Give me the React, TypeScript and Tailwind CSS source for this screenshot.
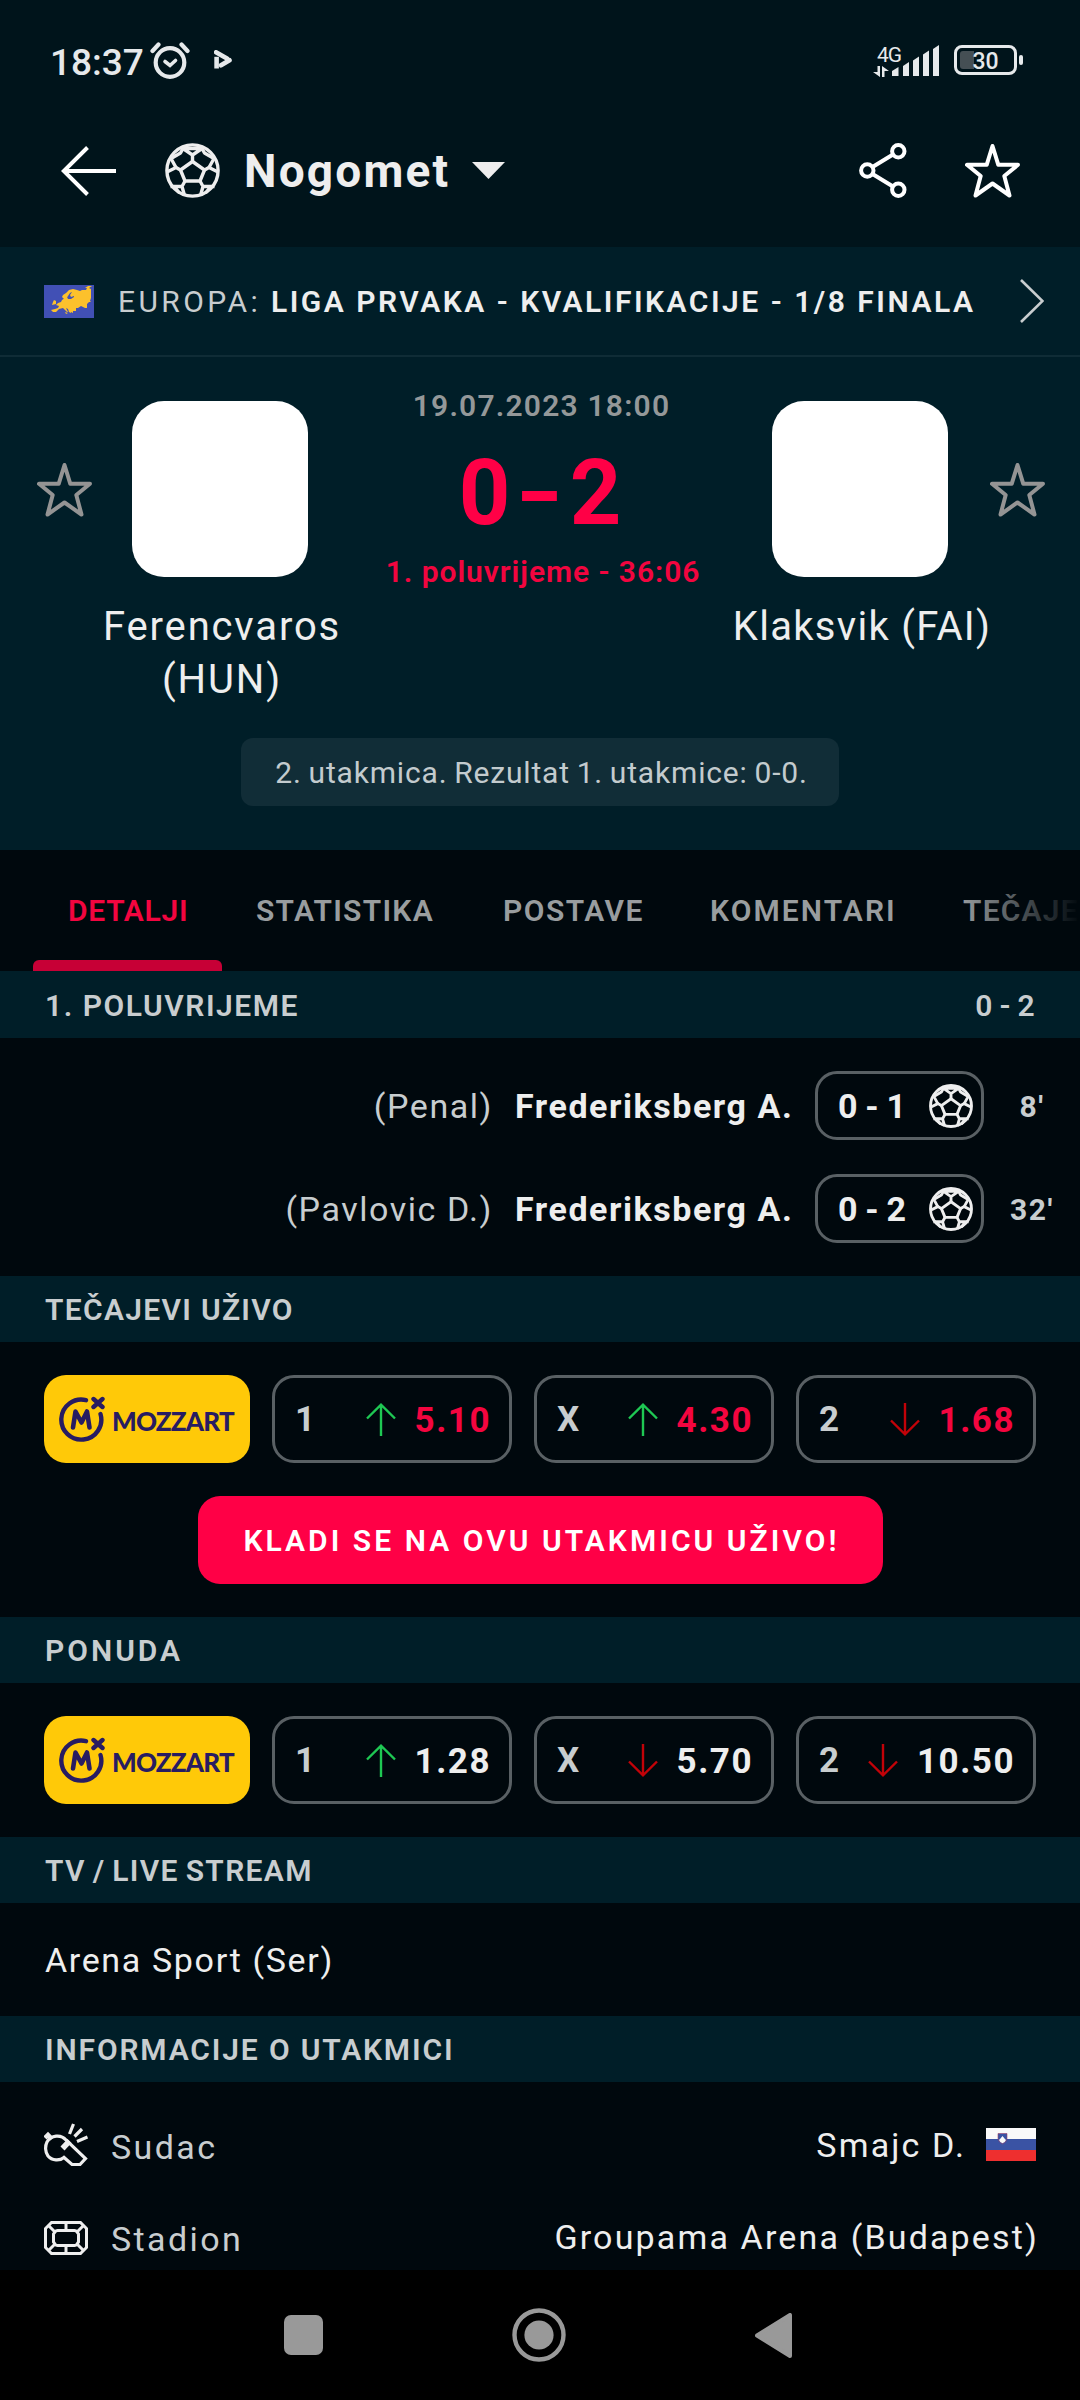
import { clsx } from 'clsx'
import type { ReactNode } from 'react'

type Trend = 'up' | 'down'

const tabs = [
  { label: 'DETALJI', className: 'ml-[68px] w-[188px] tracking-[0.7px]' },
  { label: 'STATISTIKA', className: 'w-[247px] tracking-[1.3px]' },
  { label: 'POSTAVE', className: 'w-[207px] tracking-[1.5px]' },
  { label: 'KOMENTARI', className: 'w-[253px] tracking-[2.1px]' },
  { label: 'TEČAJE', className: 'tracking-[1.2px]' },
]

const goals = [
  { note: '(Penal)', player: 'Frederiksberg A.', score: '0 - 1', minute: "8'" },
  { note: '(Pavlovic D.)', player: 'Frederiksberg A.', score: '0 - 2', minute: "32'" },
]

const liveOdds: { name: string; trend: Trend; value: string }[] = [
  { name: '1', trend: 'up', value: '5.10' },
  { name: 'X', trend: 'up', value: '4.30' },
  { name: '2', trend: 'down', value: '1.68' },
]

const preOdds: { name: string; trend: Trend; value: string }[] = [
  { name: '1', trend: 'up', value: '1.28' },
  { name: 'X', trend: 'down', value: '5.70' },
  { name: '2', trend: 'down', value: '10.50' },
]

function BallIcon({ className, stroke = 3.4 }: { className?: string; stroke?: number }) {
  return (
    <svg viewBox="0 0 55 55" className={className} fill="none" stroke="#eeeeee" strokeWidth={stroke} strokeLinejoin="round">
      <circle cx="27.5" cy="27.5" r="25.6" />
      <path d="M27.5 18.5 39.5 27 35 38H20L15.5 27z" />
      <path d="M27.5 18.5V12M18 5.5 27.5 12 37 5.5M17 5.5H38" />
      <path d="M18 5.5 15.5 10 6 15.5 11 24.5M37 5.5 39.5 10 49 15.5 44 24.5" />
      <path d="M15.5 27 11 24.5 2 29M39.5 27 44 24.5 53 29" />
      <path d="M20 38 17 43.5H5.5M35 38 38 43.5H49.5M17 43.5 19.5 52.5M38 43.5 35.5 52.5M9 43.5 14.5 50M46 43.5 40.5 50" />
    </svg>
  )
}

function StarIcon({ color }: { color: string }) {
  return (
    <svg viewBox="0 0 55 55" className="h-[55px] w-[55px] shrink-0" fill="none" stroke={color} strokeWidth="4" strokeLinejoin="round">
      <path d="M27.5 3 33.3 21.8H53L39.3 33 44.5 52.5 27.5 40.5 10.5 52.5 15.7 33 2 21.8H21.7z" />
    </svg>
  )
}

function TrendIcon({ trend }: { trend: Trend }) {
  return (
    <svg
      viewBox="0 0 30 33"
      className={clsx('h-[33px] w-[30px]', trend === 'down' && 'rotate-180')}
      fill="none"
      stroke={trend === 'up' ? '#1ec853' : '#c20208'}
      strokeWidth="2.4"
    >
      <path d="M15 33V1.5M1 15.5 15 1.7 29 15.5" />
    </svg>
  )
}

function EuropeFlag() {
  return (
    <svg viewBox="0 0 50 33" className="h-[33px] w-[50px]">
      <rect width="50" height="33" fill="#4150b5" />
      <path
        fill="#fcc12c"
        d="M7 25l4-1 3-1 1-2-3-1 2-2 3-1 1-2 3-2 2-1 1 2 3 0 3-2 0-1-3 1-1-2 2-3-2 1-2 3-2 3-2 0-2-2 1-2 3-2 3-3 4-1 4 1 3 1 2-1 4 0 1-2-2 0 3-2 4 0-3 2 2 1 0 9-1 3 1 1-2 0-2 2 0 4-2 0-4-2-3 2-2 0 0 3-3 0 0 2-2-1 0 1-2-1-1-3-2-1 2 4-1 0-4-4-4 1-3 3-3 0-2-2z"
      />
      <path fill="#fcc12c" d="M9 17l1-2 2 1 0 3-4 1zM21 27l3 1-2 1z" />
    </svg>
  )
}

function SloveniaFlag() {
  return (
    <svg viewBox="0 0 50 33" className="h-[33px] w-[50px]">
      <rect width="50" height="33" fill="#f9f9f9" />
      <rect y="11" width="50" height="11" fill="#3a53a4" />
      <rect y="22" width="50" height="11" fill="#ee2f2f" />
      <path d="M12 5.5h9v5q-.5 4-4.5 5.500-4-1.500-4.500-5.500z" fill="#3a53a4" stroke="#a0436a" strokeWidth=".6" />
      <path d="M13 12l1.500-1.500L16.500 8l2 2.500L20 12q-1 2.500-3.500 3.200Q14 14.500 13 12z" fill="#f9f9f9" />
    </svg>
  )
}

function WhistleIcon() {
  return (
    <svg viewBox="0 0 44 44" className="h-11 w-11" fill="none" stroke="#eeeeee" strokeWidth="3.2">
      <path d="M3 19C7 12 17 11 22 17L41.5 35.5 36 41.5H28L20 34.5C16 38 8 38 4 33 1 29 1 23 3 19z" />
      <path d="M25.5 18 18.5 25.5" strokeWidth="5.5" />
      <path d="M1 15 4 12 8 16" strokeWidth="4.5" />
      <path d="M25.5 11 29.5 1M30.5 13.5 38 6M33 18.5 43.5 14" />
    </svg>
  )
}

function StadiumIcon() {
  return (
    <svg viewBox="0 0 44 34" className="h-[34px] w-11" fill="none" stroke="#eeeeee" strokeWidth="3">
      <path d="M7.5 1.5H36.5L42.5 7.5V26.5L36.5 32.5H7.5L1.5 26.5V7.5z" />
      <path d="M13.5 9.5H30.5Q32 9.5 33 11L34.5 13V21L33 23Q32 24.5 30.5 24.5H13.5Q12 24.5 11 23L9.500 21V13L11 11Q12 9.500 13.500 9.500z" />
      <path d="M22 1.500V9.500M22 24.500V32.500M4 4 11 11M40 4 33 11M4 30 11 23M40 30 33 23" />
    </svg>
  )
}

function MozzartLogo() {
  return (
    <div className="flex h-[88px] w-[206px] shrink-0 items-center rounded-[22px] bg-[#ffc908] pl-[15px]">
      <svg viewBox="0 0 46 46" className="h-[46px] w-[46px] shrink-0" fill="none" stroke="#281c62" strokeLinecap="round" strokeLinejoin="round">
        <path d="M27 4.2A20 20 0 1 0 41.5 18" strokeWidth="4.4" />
        <path d="M14 31.5 16.5 15.5 22.5 26.5 28 15.5 30.5 31.5" strokeWidth="4.6" />
        <path d="M34.5 3 43.5 11M43.5 3 34.5 11" strokeWidth="4.4" />
      </svg>
      <span className="mt-1 ml-[7px] font-['Lato'] text-[26px] leading-none font-black tracking-[-0.8px] text-[#281c62]">
        MOZZART
      </span>
    </div>
  )
}

function SectionHeader({ title, right, className }: { title: string; right?: string; className?: string }) {
  return (
    <div className={clsx('flex items-center justify-between bg-[#001e28] pt-[2px] pr-[45px] pl-[45px] text-[30px] leading-none font-semibold text-[#c8cdcf]', className)}>
      <span>{title}</span>
      {right && <span className="tracking-[0.3px] [word-spacing:-1px]">{right}</span>}
    </div>
  )
}

function OddsRow({ odds, live }: { odds: typeof liveOdds; live?: boolean }) {
  return (
    <div className="flex gap-[22px] px-11">
      <MozzartLogo />
      {odds.map((o) => (
        <div
          key={o.name}
          className="flex h-[88px] flex-1 items-center rounded-[22px] border-3 border-[#596064] pr-[18px] pl-5 text-[35px] leading-none font-bold"
        >
          <span className="mt-[1px] text-[#c8cdcf]">{o.name}</span>
          <div className="ml-auto flex items-center gap-[19px]">
            <TrendIcon trend={o.trend} />
            <span className={clsx('mt-[2px] tracking-[1.5px]', live ? 'text-[#f4053f]' : 'text-[#eeeeee]')}>{o.value}</span>
          </div>
        </div>
      ))}
    </div>
  )
}

function Team({ name, className }: { name: string; className?: string }) {
  return (
    <div className="flex w-[256px] shrink-0 flex-col items-center">
      <div className="mt-11 h-44 w-44 rounded-[32px] bg-white" />
      <div className={clsx('mt-[23px] text-center text-[40px] leading-[53px] whitespace-pre text-[#eeeeee]', className)}>{name}</div>
    </div>
  )
}

function InfoRow({ icon, label, children }: { icon: ReactNode; label: string; children: ReactNode }) {
  return (
    <div className="flex items-center px-11 text-[34px] leading-none tracking-[2.15px]">
      {icon}
      <span className="mt-[3px] ml-[23px] tracking-[2.4px] text-[#c8cdcf]">{label}</span>
      <div className="-mt-[1px] ml-auto flex items-center text-[#eeeeee]">{children}</div>
    </div>
  )
}

function StatusBar() {
  return (
    <div className="flex h-[120px] items-center text-[#e6e9eb]">
      <span className="mt-[5px] ml-[50px] w-[100px] text-[37px] leading-none font-medium">18:37</span>
      <svg viewBox="0 0 40 37" className="h-[37px] w-10" fill="none" stroke="#e6e9eb" strokeLinecap="round">
        <circle cx="20" cy="20.5" r="14.3" strokeWidth="4.2" />
        <path d="M2.5 9 8.5 2.5M37.5 9 31.5 2.5" strokeWidth="4.2" />
        <path d="M15 19.5 20 23.5 25.5 18.5" strokeWidth="3.6" />
      </svg>
      <svg viewBox="0 0 18 20" className="ml-6 h-5 w-[18px]" fill="none" stroke="#e6e9eb" strokeWidth="4.6">
        <path d="M2 2.300 13 8.500" strokeLinecap="round" />
        <path d="M2.600 6.800V18.500" />
        <path d="M7 15.300 15.500 10.200" strokeLinecap="round" />
      </svg>
      <div className="mt-[1px] ml-auto flex w-[26px] flex-col">
        <span className="ml-1 text-[21px] leading-[21px] tracking-[-1px]">4G</span>
        <svg viewBox="0 0 16 11" className="h-[11px] w-4" fill="#e6e9eb">
          <path d="M4.5 0H7V11L0 6H4.5zM11.5 11H9V0L16 5H11.5z" />
        </svg>
      </div>
      <svg viewBox="0 0 48 31" className="-ml-[7px] h-[31px] w-12" fill="#e6e9eb">
        <path d="M0 26 6.500 22V31H0zM11 21 17 17V31H11zM21 15.500 27 11.500V31H21zM31 9.500 37 5.500V31H31zM41 4 47 0V31H41z" />
      </svg>
      <div className="ml-[14px] flex items-center gap-[2px]">
        <div className="relative flex h-[30px] w-[63px] items-center justify-center rounded-[8px] border-3 border-[#e6e9eb]">
          <div className="absolute top-[3px] left-[3px] h-[18px] w-[14px] rounded-l-[3px] bg-[#454f54]" />
          <span className="relative mt-[2px] text-[23px] leading-none font-medium">30</span>
        </div>
        <div className="h-[10px] w-1 rounded-[2px] bg-[#e6e9eb]" />
      </div>
      <div className="w-[57px]" />
    </div>
  )
}

export default function App() {
  return (
    <div className="flex h-[2400px] w-[1080px] flex-col overflow-hidden bg-[#00080d] font-['Roboto',sans-serif]">
      <header className="h-[247px] bg-[#00141b]">
        <StatusBar />
        <div className="flex h-[101px] items-center">
          <svg viewBox="0 0 55 50" className="ml-[61px] h-[50px] w-[55px]" fill="none" stroke="#ffffff" strokeWidth="4">
            <path d="M55 25H3M26.5 1.5 2.8 25 26.5 48.5" />
          </svg>
          <BallIcon className="ml-[49px] h-[55px] w-[55px]" />
          <h1 className="ml-[24px] w-[228px] text-[46px] leading-none font-bold tracking-[2.2px] text-[#eeeeee]">Nogomet</h1>
          <svg viewBox="0 0 33 17" className="h-[17px] w-[33px]" fill="#eeeeee">
            <path d="M0 0H33L16.5 17z" />
          </svg>
          <svg viewBox="0 0 48 55" className="ml-auto h-[55px] w-12" fill="none" stroke="#ffffff" strokeWidth="4">
            <circle cx="8.3" cy="27.5" r="6.2" />
            <circle cx="39.3" cy="8.3" r="6.2" />
            <circle cx="39.3" cy="46.7" r="6.2" />
            <path d="M13.5 24 34 11.5M13.5 31 34 43.5" />
          </svg>
          <div className="mr-[60px] ml-[58px]">
            <StarIcon color="#ffffff" />
          </div>
        </div>
      </header>

      <div className="flex h-[110px] items-center border-b-2 border-[#0f2c36] bg-[#001e28] text-[30px] leading-none">
        <div className="ml-11">
          <EuropeFlag />
        </div>
        <span className="mt-[2px] ml-[24px] w-[153px] tracking-[3.4px] text-[#c8cdcf]">EUROPA:</span>
        <span className="mt-[2px] font-semibold tracking-[2.5px] whitespace-nowrap text-[#eeeeee]">LIGA PRVAKA - KVALIFIKACIJE - 1/8 FINALA</span>
        <svg viewBox="0 0 24 44" className="mr-9 ml-auto h-11 w-6" fill="none" stroke="#c8cdcf" strokeWidth="2.6">
          <path d="M1 1 22.5 22 1 43" />
        </svg>
      </div>

      <section className="flex h-[493px] flex-col bg-[#001e28]">
        <div className="flex h-[381px]">
          <div className="mt-[105px] ml-[37px] w-[55px]">
            <StarIcon color="#949494" />
          </div>
          <Team name={'Ferencvaros\n(HUN)'} className="ml-1 tracking-[1.85px]" />
          <div className="flex flex-1 flex-col items-center leading-none">
            <div className="mt-[34px] ml-[3px] text-[30px] font-semibold tracking-[1.2px] text-[#949899]">19.07.2023 18:00</div>
            <div className="mt-[28px] flex text-[90px] font-bold text-[#ff0046]">
              <span className="w-[55.5px] text-center">0</span>
              <span className="w-[55.5px] scale-x-140 text-center">-</span>
              <span className="w-[55.5px] text-center">2</span>
            </div>
            <div className="mt-[18px] ml-[6px] text-[30px] font-semibold tracking-[0.95px] whitespace-nowrap text-[#f2053f]">1. poluvrijeme - 36:06</div>
          </div>
          <Team name="Klaksvik (FAI)" className="ml-1 tracking-[1.3px]" />
          <div className="mt-[105px] mr-[35px] ml-[2px]">
            <StarIcon color="#949494" />
          </div>
        </div>
        <div className="flex h-[68px] w-[598px] items-center justify-center self-center rounded-[12px] bg-[#112d37] pt-[1px] pl-[3px] text-[30px] leading-none tracking-[0.83px] [word-spacing:-1.5px] whitespace-nowrap text-[#c3cbce]">
          2. utakmica. Rezultat 1. utakmice: 0-0.
        </div>
      </section>

      <nav className="relative flex h-[121px] items-center overflow-hidden text-[30px] leading-none font-semibold text-[#999d9f]">
        {tabs.map((tab, i) => (
          <span key={tab.label} className={clsx('shrink-0', tab.className, i === 0 && 'text-[#f2053f]')}>
            {tab.label}
          </span>
        ))}
        <div className="absolute bottom-0 left-[33px] h-[11px] w-[189px] rounded-t-[6px] bg-[#c70036]" />
        <div className="absolute top-0 right-0 h-full w-[120px] bg-linear-to-r from-transparent to-[#00080d]" />
      </nav>

      <SectionHeader title="1. POLUVRIJEME" right="0 - 2" className="h-[67px] tracking-[1.55px]" />
      <div className="flex h-[238px] flex-col gap-[34px] pt-[33px]">
        {goals.map((g) => (
          <div key={g.minute} className="flex h-[69px] items-center justify-end text-[34px] leading-none">
            <span className="tracking-[1.55px] text-[#c8cdcf]">{g.note}</span>
            <span className="ml-[22px] w-[300px] font-bold tracking-[1.55px] whitespace-nowrap text-[#eeeeee]">{g.player}</span>
            <div className="flex h-[69px] w-[169px] items-center justify-between rounded-[22px] border-3 border-[#596064] pr-2 pl-5">
              <span className="font-bold tracking-[-0.3px] text-[#eeeeee]">{g.score}</span>
              <BallIcon className="h-11 w-11" stroke={3.6} />
            </div>
            <span className="mt-[2px] w-24 text-center text-[30px] font-bold tracking-[1.5px] text-[#c8cdcf]">{g.minute}</span>
          </div>
        ))}
      </div>

      <SectionHeader title="TEČAJEVI UŽIVO" className="h-[66px] tracking-[1.3px]" />
      <div className="flex h-[275px] flex-col pt-[33px]">
        <OddsRow odds={liveOdds} live />
        <button className="mt-[33px] h-[88px] w-[685px] self-center rounded-[22px] bg-[#ff0046] pt-[1px] pl-[3px] text-[30px] leading-none font-semibold tracking-[3.05px] whitespace-nowrap text-white">
          KLADI SE NA OVU UTAKMICU UŽIVO!
        </button>
      </div>

      <SectionHeader title="PONUDA" className="h-[66px] tracking-[3px]" />
      <div className="h-[154px] pt-[33px]">
        <OddsRow odds={preOdds} />
      </div>

      <SectionHeader title="TV / LIVE STREAM" className="h-[66px] tracking-[1.35px] [word-spacing:-2px]" />
      <div className="flex h-[113px] items-center pl-[45px] text-[34px] leading-none tracking-[1.65px] text-[#eeeeee]">Arena Sport (Ser)</div>

      <SectionHeader title="INFORMACIJE O UTAKMICI" className="h-[66px] tracking-[1.85px]" />
      <div className="flex h-[188px] flex-col gap-[52px] pt-[41px]">
        <InfoRow icon={<WhistleIcon />} label="Sudac">
          <span className="mr-5">Smajc D.</span>
          <SloveniaFlag />
        </InfoRow>
        <InfoRow icon={<StadiumIcon />} label="Stadion">
          <span className="-mr-[3px]">Groupama Arena (Budapest)</span>
        </InfoRow>
      </div>

      <footer className="flex h-[130px] items-center bg-black">
        <div className="ml-[284px] h-10 w-[39px] rounded-[7px] bg-[#999999]" />
        <svg viewBox="0 0 54 54" className="ml-[189px] h-[54px] w-[54px]">
          <circle cx="27" cy="27" r="24.5" fill="none" stroke="#999999" strokeWidth="4.4" />
          <circle cx="27" cy="27" r="14.6" fill="#999999" />
        </svg>
        <svg viewBox="0 0 37 45" className="ml-[189px] h-[45px] w-[37px]" fill="#999999" stroke="#999999" strokeWidth="4" strokeLinejoin="round">
          <path d="M35 2V43L2 22.5z" />
        </svg>
      </footer>
    </div>
  )
}
